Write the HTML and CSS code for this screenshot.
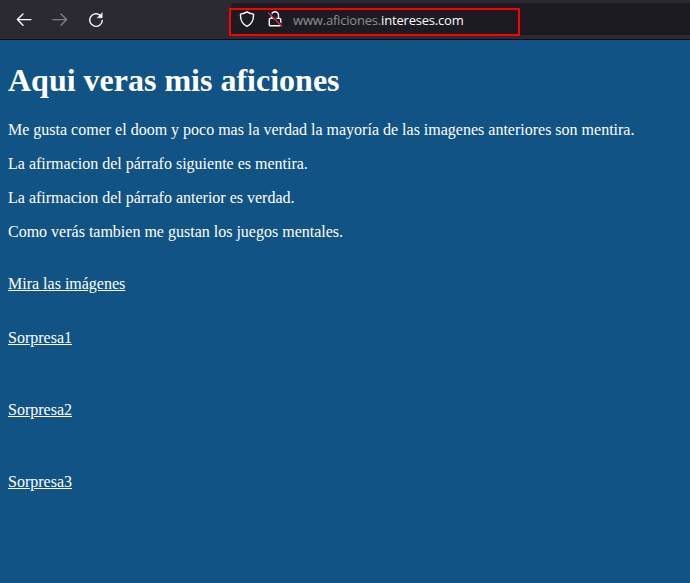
FILE: index.html
```
<!DOCTYPE html>
<html lang="es">
<head>
<meta charset="utf-8">
<title>Aficiones</title>
<link rel="stylesheet" href="styles.css">
</head>
<body>
<header class="toolbar">
  <nav class="nav">
    <svg class="icon" viewBox="0 0 16 16"><path d="M15 7.6H1.5M7 2L1.4 7.6L7 13.2"/></svg>
    <svg class="icon disabled" viewBox="0 0 16 16"><path d="M1 7.6H14.5M9 2l5.6 5.6L9 13.2"/></svg>
    <svg class="icon" viewBox="0 0 16 16"><path d="M12 3.200A6.300 6.300 0 1 0 14.300 8.500"/><path class="solid" d="M14.200 1v4.800H9.400z"/></svg>
  </nav>
  <div class="address">
    <svg class="icon" viewBox="0 0 16 16"><path d="M8 .9C6.2 2.2 4 2.8 1.5 3.1C1.2 8.5 3 13 8 15.3C13 13 14.8 8.5 14.5 3.1C12 2.8 9.800 2.200 8 .9z"/></svg>
    <svg class="icon lock" viewBox="0 0 16 16"><path d="M4.500 7V4.300a3.500 3.500 0 0 1 7 0V7M3.300 7.400h9.400a1 1 0 0 1 1 1v5.400a1 1 0 0 1-1 1H3.300a1 1 0 0 1-1-1V8.400a1 1 0 0 1 1-1z"/><path class="gap" d="M2.500 1.500l13 13"/><path class="slash" d="M1.500 2l13 13"/></svg>
    <span class="url">www.aficiones.<b>intereses.com</b></span>
    <div class="highlight"></div>
  </div>
</header>
<main>
  <h1>Aqui veras mis aficiones</h1>
  <p>Me gusta comer el doom y poco mas la verdad la mayoría de las imagenes anteriores son mentira.</p>
  <p>La afirmacion del párrafo siguiente es mentira.</p>
  <p>La afirmacion del párrafo anterior es verdad.</p>
  <p>Como verás tambien me gustan los juegos mentales.</p>
  <div class="links">
    <a class="images" href="#">Mira las imágenes</a>
    <a href="#">Sorpresa1</a>
    <a href="#">Sorpresa2</a>
    <a href="#">Sorpresa3</a>
  </div>
</main>
</body>
</html>
```
FILE: styles.css
```
body {
  margin: 0;
  height: 583px;
  overflow: hidden;
  background: #115384;
  color: #fff;
  font: 16px/18px "Liberation Serif", "Times New Roman", serif;
}
.toolbar {
  box-sizing: border-box;
  display: flex;
  height: 40px;
  padding-top: 3px;
  background: #2b2a33;
  border-bottom: 1px solid #0c0c0d;
}
.nav {
  box-sizing: border-box;
  display: flex;
  align-items: center;
  gap: 20px;
  width: 231px;
  height: 34px;
  padding-left: 16px;
}
.icon {
  width: 16px;
  height: 16px;
  fill: none;
  stroke: #fbfbfe;
  stroke-width: 1.4;
  stroke-linecap: round;
  stroke-linejoin: round;
}
.disabled { opacity: .4; }
.solid { fill: #fbfbfe; stroke-width: .5; }
.address {
  position: relative;
  box-sizing: border-box;
  display: flex;
  align-items: center;
  flex: 1;
  height: 32px;
  padding-left: 8px;
  background: #1c1b22;
  border-radius: 4px 0 0 4px;
}
.lock { margin-left: 12px; }
.gap { stroke: #1c1b22; }
.slash { stroke: #e22850; }
.url {
  margin-left: 10px;
  padding-top: 2px;
  color: #8f8f96;
  font: 13px/18px "Open Sans", "Noto Sans", sans-serif;
  letter-spacing: -.19px;
  white-space: nowrap;
}
.url b { color: #fbfbfe; font-weight: 400; }
.highlight {
  position: absolute;
  box-sizing: border-box;
  left: -2px;
  top: 5px;
  width: 291px;
  height: 28px;
  border: 2px solid #f00;
  border-radius: 1px;
}
main { padding: 22px 8px 0; }
h1 {
  margin: 0 0 22px;
  font-size: 32px;
  line-height: 37px;
}
p { margin: 0 0 16px; }
.links {
  display: flex;
  flex-direction: column;
  align-items: flex-start;
  gap: 54px;
  padding-top: 18px;
}
a { color: #fff; text-decoration: underline; }
.images { margin-bottom: -18px; }
```
